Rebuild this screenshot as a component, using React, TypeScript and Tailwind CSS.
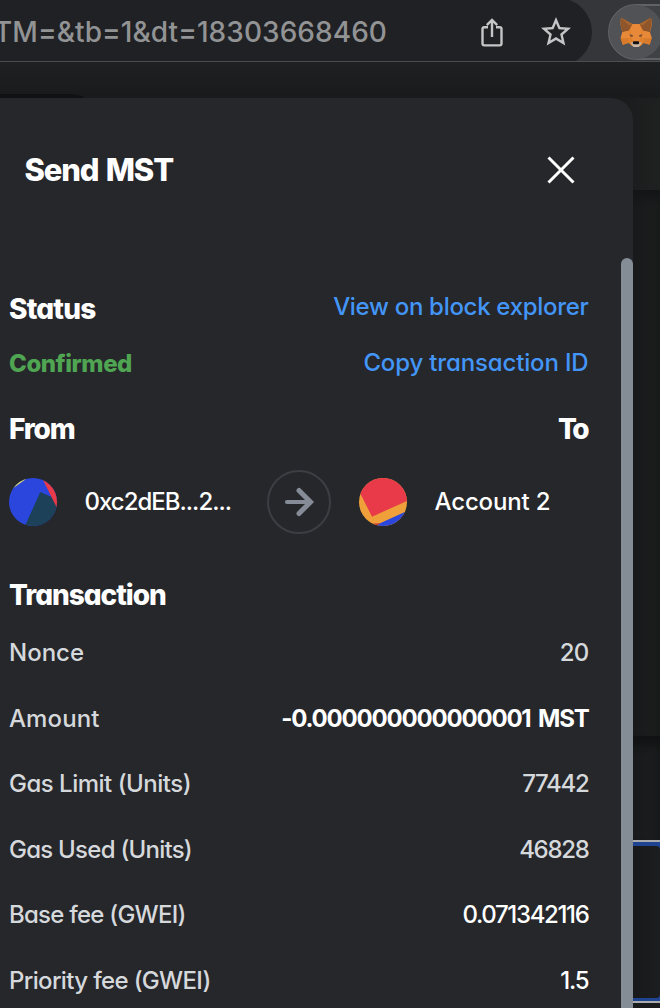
import React from "react";

function ShareIcon() {
  return (
    <svg className="h-8 w-6 shrink-0" viewBox="0 0 24 32" fill="none" stroke="#c4c5c6" strokeWidth="2.4">
      <path d="M8 11.2H4.3a1.8 1.8 0 0 0-1.8 1.8v14.6a1.8 1.8 0 0 0 1.8 1.8h15.4a1.8 1.8 0 0 0 1.8-1.8V13a1.8 1.8 0 0 0-1.8-1.8H16" />
      <path d="M12 21V4.5M6.800 9.200L12 4l5.200 5.200" />
    </svg>
  );
}

function StarIcon() {
  return (
    <svg className="size-[36px] shrink-0" viewBox="0 0 24 24" fill="#c4c5c6">
      <path d="M22 9.240l-7.190-.62L12 2 9.190 8.630 2 9.240l5.460 4.730L5.820 21 12 17.270 18.180 21l-1.630-7.030L22 9.240zM12 15.400l-3.760 2.270 1-4.280-3.320-2.880 4.380-.38L12 6.100l1.710 4.040 4.380.38-3.320 2.880 1 4.280L12 15.400z" />
    </svg>
  );
}

function Fox() {
  return (
    <svg className="h-[31px] w-8" viewBox="61 50 96 93">
      <path fill="#e0812d" d="M64 52l34 19h22l34-19 3 20-6 24 5 17-6 20-18-5-9 9H97l-10-9-18 5-6-20 5-17-6-24z" />
      <path fill="#8f562c" d="M64 52l34 20-11 19-19 5-6-24zM154 52l-34 20 11 19 19 5 6-24z" />
      <path fill="#a9642b" d="M64 52l34 20-9 4zM154 52l-34 20 9 4z" />
      <path fill="#e8893a" d="M98 72h22l6 20-8 32H100l-8-32z" />
      <path fill="#d87c2c" d="M63 113h22l2 14-18 6zM156 113h-22l-2 14 18 6z" />
      <path fill="#e8893a" d="M68 96l19-5 5 14-4 9-25-1zM150 96l-19-5-5 14 4 9 26-1z" />
      <path fill="#6b4a38" d="M90 102l10 3-2 5-6-2zM128 102l-10 3 2 5 6-2z" />
      <path fill="#cbb6a7" d="M93 127l8-2h17l8 2-8 13h-17z" />
      <path fill="#111214" d="M101 123h16l2 6-3 3h-14l-3-3z" />
    </svg>
  );
}

function Toolbar() {
  return (
    <div className="flex h-[62px] shrink-0 items-start overflow-hidden border-b border-[#4b4c4e] bg-[#35363a]">
      <div className="-mt-0.5 flex h-[68px] w-[592px] shrink-0 items-center rounded-r-[34px] bg-[#202124]">
        <div className="flex w-[388px] shrink-0 justify-end text-[28px] tracking-[0.06px] whitespace-nowrap text-[#929395]">
          <span className="pr-[1px]">TM=&amp;tb=1&amp;dt=18303668460</span>
        </div>
        <div className="ml-[92px] flex items-center gap-[34px]">
          <ShareIcon />
          <StarIcon />
        </div>
      </div>
      <div className="mt-1 ml-4 flex h-14 w-[120px] shrink-0 rounded-l-full border-2 border-[#606265] bg-[#404145]">
        <div className="-mt-px -ml-px flex size-[54px] items-center justify-center rounded-full bg-[#505255]">
          <Fox />
        </div>
      </div>
    </div>
  );
}

function Header() {
  return (
    <div className="flex h-36 shrink-0 items-center justify-between pr-[58px] pl-[24.5px]">
      <h1 className="text-[31px] font-extrabold tracking-[-1.2px] [word-spacing:2px]">Send MST</h1>
      <svg className="size-7" viewBox="0 0 28 28" stroke="#fff" strokeWidth="3">
        <path d="M1.500 1.500l25 25M26.500 1.500l-25 25" />
      </svg>
    </div>
  );
}

function SenderAvatar() {
  return (
    <svg className="ml-px size-12 shrink-0" viewBox="0 0 48 48">
      <clipPath id="sender"><circle cx="24" cy="24" r="24" /></clipPath>
      <g clipPath="url(#sender)">
        <rect width="48" height="48" fill="#2a46dc" />
        <path fill="#1c4159" d="M31.300 14L50 22.500V50H15z" />
        <path fill="#e83a48" d="M33 0L50 34V0z" />
        <path fill="#e5e36a" d="M3 11L17 1V0H0v11z" />
      </g>
    </svg>
  );
}

function RecipientAvatar() {
  return (
    <svg className="size-12 shrink-0" viewBox="0 0 48 48">
      <clipPath id="recipient"><circle cx="24" cy="24" r="24" /></clipPath>
      <g clipPath="url(#recipient)">
        <rect width="48" height="48" fill="#f0a03a" />
        <path fill="#e83a48" d="M0 13L13 38.700 50 22V0H0z" />
        <path fill="#2a46dc" d="M15 48L48 33v15z" />
        <path fill="#c73a38" d="M14 45.500l7-.3-3 2.800z" />
      </g>
    </svg>
  );
}

function Parties() {
  return (
    <div className="flex h-[76px] items-center">
      <SenderAvatar />
      <span className="ml-[27.5px] w-[182.5px] whitespace-nowrap tracking-[-1px]">0xc2dEB...2...</span>
      <div className="flex size-16 shrink-0 items-center justify-center rounded-full border-2 border-[#3d3e43]">
        <svg className="size-8" viewBox="0 0 32 32" fill="none" stroke="#858c97">
          <path d="M4 16h22" strokeWidth="4.2" strokeLinecap="round" />
          <path d="M16 4.500L27.500 16 16 27.500" strokeWidth="5" strokeLinecap="round" strokeLinejoin="miter" />
        </svg>
      </div>
      <div className="ml-7 flex items-center gap-[27.5px]">
        <RecipientAvatar />
        <span className="tracking-[-0.15px] whitespace-nowrap">Account 2</span>
      </div>
    </div>
  );
}

type Row = { label: string; value: string; labelClass: string; valueClass: string };

const rows: Row[] = [
  { label: "Nonce", value: "20", labelClass: "", valueClass: "text-[#d6d9dc] tracking-[-0.8px]" },
  { label: "Amount", value: "-0.000000000000001 MST", labelClass: "tracking-[0.1px]", valueClass: "font-bold tracking-[-1.2px] [word-spacing:3px]" },
  { label: "Gas Limit (Units)", value: "77442", labelClass: "tracking-[-0.5px]", valueClass: "text-[#d6d9dc] tracking-[-1.3px]" },
  { label: "Gas Used (Units)", value: "46828", labelClass: "tracking-[-0.75px]", valueClass: "text-[#d6d9dc] tracking-[-1.3px]" },
  { label: "Base fee (GWEI)", value: "0.071342116", labelClass: "tracking-[-0.75px]", valueClass: "tracking-[-1.35px]" },
  { label: "Priority fee (GWEI)", value: "1.5", labelClass: "tracking-[-0.65px]", valueClass: "tracking-[-1.2px]" },
];

function Details() {
  return (
    <div className="min-w-0 flex-1 pt-[37px] pr-[32.5px] pl-2">
      <div className="flex h-[57px] items-center justify-between pt-0.5 pl-px">
        <h2 className="text-[28px] font-extrabold tracking-[-0.8px]">Status</h2>
        <span className="pb-[3px] tracking-[-0.3px] text-[#4396f7]">View on block explorer</span>
      </div>
      <div className="flex h-[54px] items-center justify-between pt-0.5 pl-px">
        <span className="font-extrabold tracking-[-0.45px] text-[#4fa552]">Confirmed</span>
        <span className="pb-0.5 tracking-[-0.15px] text-[#4396f7]">Copy transaction ID</span>
      </div>
      <div className="flex h-[74px] items-center justify-between pt-[3px] pl-px text-[28px] font-extrabold">
        <h2 className="tracking-[-1.2px]">From</h2>
        <h2 className="pr-[1.5px] tracking-[-2.5px]">To</h2>
      </div>
      <Parties />
      <div className="mt-7 flex h-[51.5px] items-center pt-0.5 pl-px">
        <h2 className="text-[28px] font-extrabold tracking-[-1.05px]">Transaction</h2>
      </div>
      {rows.map((r) => (
        <div key={r.label} className="flex h-[65.5px] items-center justify-between pt-0.5 pl-px whitespace-nowrap">
          <span className={`text-[#d6d9dc] ${r.labelClass}`}>{r.label}</span>
          <span className={r.valueClass}>{r.value}</span>
        </div>
      ))}
    </div>
  );
}

function Popup() {
  return (
    <div className="flex w-[633px] shrink-0 flex-col overflow-hidden rounded-tr-[22px] bg-[#26272b]">
      <Header />
      <div className="flex min-h-0 flex-1">
        <Details />
        <div className="mt-4 w-3 shrink-0 rounded-t-full bg-[#848c96]" />
      </div>
    </div>
  );
}

function PageEdge() {
  return (
    <div className="-ml-6 flex flex-1 flex-col overflow-hidden">
      <div className="h-[92px] shrink-0 bg-linear-to-r from-[#191a1b] to-[#1f2020]" />
      <div className="h-[546px] shrink-0 bg-linear-to-r from-[#17191a] from-40% to-[#1d1e1e] shadow-[inset_0_8px_10px_#141516]" />
      <div className="h-[104px] shrink-0 bg-linear-to-r from-[#17191a] from-40% to-[#1c1d1e] shadow-[inset_0_8px_10px_#111213]" />
      <div className="h-[163px] w-[54px] shrink-0 border-y-2 border-[#a9abad] bg-[#1e4391]">
        <div className="mt-1 mr-[3px] h-[152px] rounded-r-[4px] bg-linear-to-r from-[#17191a] from-40% to-[#1c1d1e]" />
      </div>
      <div className="flex-1 bg-[#191a1b]" />
    </div>
  );
}

export default function App() {
  return (
    <div className="flex h-[1008px] w-[660px] flex-col overflow-hidden bg-[#1a1b1c] font-['Inter',sans-serif] text-[24px] font-[450] text-white [font-feature-settings:'cv11'_1]">
      <Toolbar />
      <div className="flex h-9 shrink-0 items-end bg-linear-to-b from-[#1f2021] to-[#191a1b]">
        <div className="h-1 w-[84px] rounded-tr-[18px_4px] bg-[#101112]" />
      </div>
      <div className="flex min-h-0 flex-1">
        <div className="z-10 flex">
          <Popup />
        </div>
        <PageEdge />
      </div>
    </div>
  );
}
